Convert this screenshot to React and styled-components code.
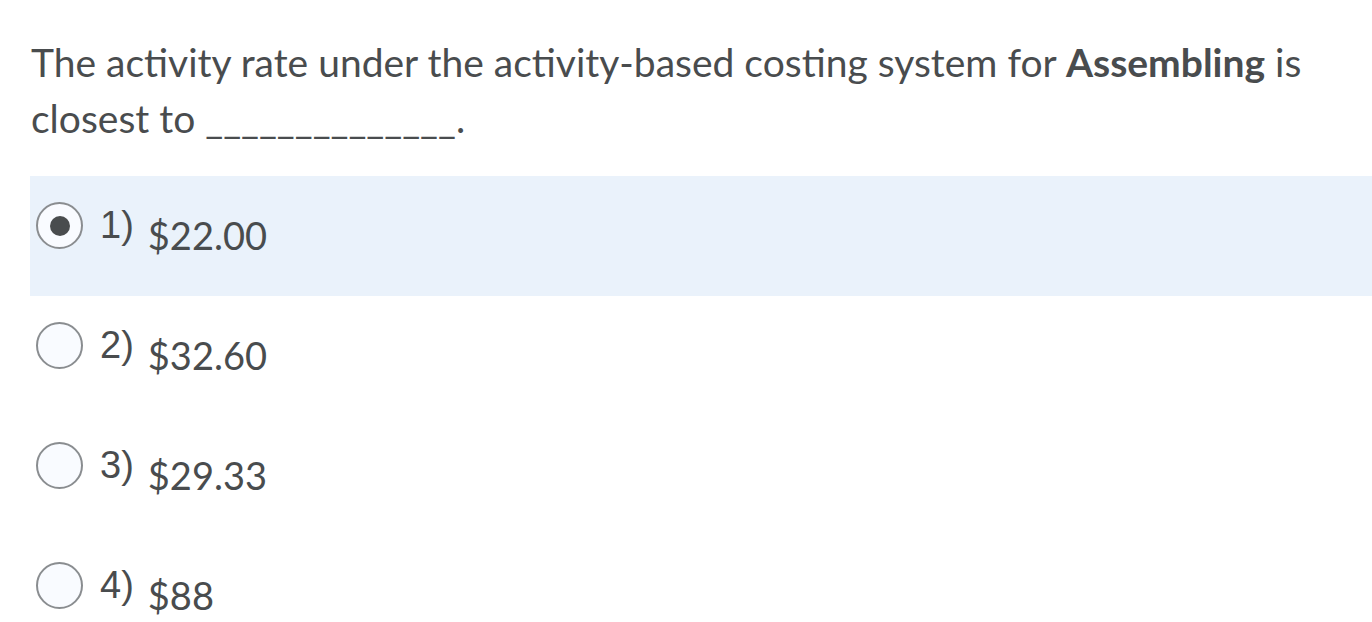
import React, { useState } from "react";
import styled, { createGlobalStyle } from "styled-components";

const GlobalStyle = createGlobalStyle`
  html, body {
    margin: 0;
    padding: 0;
    background: #ffffff;
  }
`;

const Page = styled.div`
  padding: 34px 0 0 0;
  font-family: Lato, "Open Sans", sans-serif;
  color: #494c4e;
`;

const Question = styled.p`
  margin: 0 0 30px 31px;
  font-size: 39px;
  line-height: 56px;
  max-width: 1320px;
`;

const Blank = styled.span`
  letter-spacing: 0;
`;

const Options = styled.div`
  display: flex;
  flex-direction: column;
  margin-left: 30px;
`;

const Row = styled.label`
  display: flex;
  align-items: flex-start;
  height: 120px;
  box-sizing: border-box;
  padding: 26px 0 0 6px;
  background: ${(p) => (p.$selected ? "#eaf2fb" : "transparent")};
  cursor: pointer;
`;

const Radio = styled.span`
  width: 47px;
  height: 47px;
  box-sizing: border-box;
  border-radius: 50%;
  border: 2px solid #8a8d90;
  background: #f9fbff;
  display: flex;
  align-items: center;
  justify-content: center;
  flex-shrink: 0;

  &::after {
    content: "";
    width: 20px;
    height: 20px;
    border-radius: 50%;
    background: #494c4e;
    display: ${(p) => (p.$checked ? "block" : "none")};
  }
`;

const Num = styled.span`
  margin-left: 17px;
  font-family: "Liberation Sans", Arial, sans-serif;
  font-size: 38px;
  line-height: 47px;
  color: #494c4e;
`;

const Value = styled.span`
  margin: 10px 0 0 14px;
  font-size: 38px;
  line-height: 47px;
`;

const options = ["$22.00", "$32.60", "$29.33", "$88"];

export default function App() {
  const [selected, setSelected] = useState(0);
  return (
    <Page>
      <GlobalStyle />
      <Question>
        The activity rate under the activity-based costing system for{" "}
        <b>Assembling</b> is closest to <Blank>______________</Blank>.
      </Question>
      <Options>
        {options.map((v, i) => (
          <Row key={v} $selected={selected === i} onClick={() => setSelected(i)}>
            <Radio $checked={selected === i} />
            <Num>{i + 1})</Num>
            <Value>{v}</Value>
          </Row>
        ))}
      </Options>
    </Page>
  );
}
